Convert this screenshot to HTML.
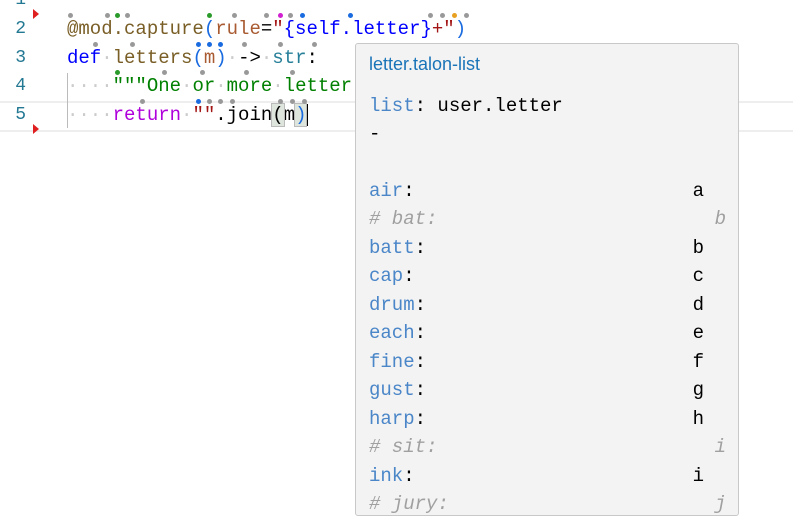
<!DOCTYPE html>
<html><head><meta charset="utf-8"><style>
body{margin:0;width:793px;height:519px;overflow:hidden;background:#fff;position:relative;font-family:"Liberation Mono",monospace;font-size:19px}
.ln{position:absolute;left:0;width:26px;text-align:right;color:#237893;line-height:28.6px;font-size:18px}
.code{position:absolute;left:67px;line-height:28.6px;white-space:pre;color:#000}
.dot{position:absolute;width:5px;height:5px;border-radius:50%;background:#999}
.g{background:#2a9a2a}.b{background:#1a6be0}.m{background:#d020d0}.o{background:#e8a020}
.pop{position:absolute;left:355px;top:43px;width:382px;height:471px;background:#f3f3f3;border:1px solid #c8c8c8;border-radius:3px;overflow:hidden}
.pl{position:absolute;left:13px;right:12px;line-height:28.5px;white-space:pre}
.k{color:#4a86c8}.c{color:#a0a0a0;font-style:italic}
.v{position:absolute;right:0}
.tri{position:absolute;left:33px;width:0;height:0;border-top:5px solid transparent;border-bottom:5px solid transparent;border-left:6px solid #e02020}
</style></head><body>
<div style="position:absolute;left:0;top:101px;width:793px;height:27px;border-top:2px solid #eee;border-bottom:2px solid #eee"></div>
<div style="position:absolute;left:67px;top:73px;width:1px;height:55px;background:#bbb"></div>
<div class="ln" style="top:-14px">1</div>
<div class="ln" style="top:15px">2</div>
<div class="ln" style="top:44px">3</div>
<div class="ln" style="top:72px">4</div>
<div class="ln" style="top:101px">5</div>
<div class="tri" style="top:9px"></div>
<div class="tri" style="top:124px"></div>
<div class="code" style="top:15px"><span style="color:#795e26">@mod.capture</span><span style="color:#1a6be0">(</span><span style="color:#a85a30">rule</span>=<span style="color:#a31515">"</span><span style="color:#0000ff">{self.letter}</span><span style="color:#a31515">+"</span><span style="color:#1a6be0">)</span></div>
<div class="code" style="top:44px"><span style="color:#0000ff">def</span><span style="color:#ccc">·</span><span style="color:#795e26">letters</span><span style="color:#1a6be0">(</span><span style="color:#a85a30">m</span><span style="color:#1a6be0">)</span><span style="color:#ccc">·</span>-&gt;<span style="color:#ccc">·</span><span style="color:#267f99">str</span>:</div>
<div class="code" style="top:72px"><span style="color:#ccc">····</span><span style="color:#008000">"""One</span><span style="color:#ccc">·</span><span style="color:#008000">or</span><span style="color:#ccc">·</span><span style="color:#008000">more</span><span style="color:#ccc">·</span><span style="color:#008000">letter</span></div>
<div class="code" style="top:101px"><span style="color:#ccc">····</span><span style="color:#af00db">return</span><span style="color:#ccc">·</span><span style="color:#a31515">""</span>.join<span style="background:#dde5dd;outline:1px solid #bbb">(</span>m<span style="background:#dde5dd;outline:1px solid #bbb;color:#1a6be0">)</span><span style="border-left:2px solid #000"></span></div>
<div class="dot" style="left:68px;top:13px"></div><div class="dot" style="left:105px;top:13px"></div><div class="dot g" style="left:115px;top:13px"></div><div class="dot" style="left:125px;top:13px"></div><div class="dot g" style="left:207px;top:13px"></div><div class="dot" style="left:232px;top:13px"></div><div class="dot" style="left:264px;top:13px"></div><div class="dot m" style="left:278px;top:13px"></div><div class="dot" style="left:288px;top:13px"></div><div class="dot b" style="left:300px;top:13px"></div><div class="dot b" style="left:348px;top:13px"></div><div class="dot" style="left:428px;top:13px"></div><div class="dot" style="left:440px;top:13px"></div><div class="dot o" style="left:452px;top:13px"></div><div class="dot" style="left:464px;top:13px"></div>
<div class="dot" style="left:93px;top:42px"></div><div class="dot" style="left:130px;top:42px"></div><div class="dot b" style="left:196px;top:42px"></div><div class="dot b" style="left:207px;top:42px"></div><div class="dot b" style="left:218px;top:42px"></div><div class="dot" style="left:242px;top:42px"></div><div class="dot" style="left:278px;top:42px"></div><div class="dot" style="left:312px;top:42px"></div>
<div class="dot g" style="left:115px;top:70px"></div><div class="dot" style="left:162px;top:70px"></div><div class="dot" style="left:200px;top:70px"></div><div class="dot" style="left:244px;top:70px"></div><div class="dot" style="left:290px;top:70px"></div>
<div class="dot" style="left:140px;top:99px"></div><div class="dot b" style="left:196px;top:99px"></div><div class="dot" style="left:207px;top:99px"></div><div class="dot" style="left:218px;top:99px"></div><div class="dot" style="left:230px;top:99px"></div><div class="dot" style="left:278px;top:99px"></div><div class="dot" style="left:290px;top:99px"></div><div class="dot" style="left:302px;top:99px"></div>
<div class="pop">
<div style="position:absolute;left:13px;top:10px;font-family:'Liberation Sans',sans-serif;font-size:18px;color:#1a74b8">letter.talon-list</div>
<div class="pl" style="top:48px"><span class="k">list</span>: user.letter</div>
<div class="pl" style="top:76px">-</div>
<div class="pl" style="top:133px"><span class="k">air</span>:<span class="v" style="right:22px">a</span></div>
<div class="pl c" style="top:161px"># bat:<span class="v">b</span></div>
<div class="pl" style="top:190px"><span class="k">batt</span>:<span class="v" style="right:22px">b</span></div>
<div class="pl" style="top:218px"><span class="k">cap</span>:<span class="v" style="right:22px">c</span></div>
<div class="pl" style="top:247px"><span class="k">drum</span>:<span class="v" style="right:22px">d</span></div>
<div class="pl" style="top:275px"><span class="k">each</span>:<span class="v" style="right:22px">e</span></div>
<div class="pl" style="top:304px"><span class="k">fine</span>:<span class="v" style="right:22px">f</span></div>
<div class="pl" style="top:332px"><span class="k">gust</span>:<span class="v" style="right:22px">g</span></div>
<div class="pl" style="top:361px"><span class="k">harp</span>:<span class="v" style="right:22px">h</span></div>
<div class="pl c" style="top:389px"># sit:<span class="v">i</span></div>
<div class="pl" style="top:418px"><span class="k">ink</span>:<span class="v" style="right:22px">i</span></div>
<div class="pl c" style="top:446px"># jury:<span class="v">j</span></div>
</div>
</body></html>
